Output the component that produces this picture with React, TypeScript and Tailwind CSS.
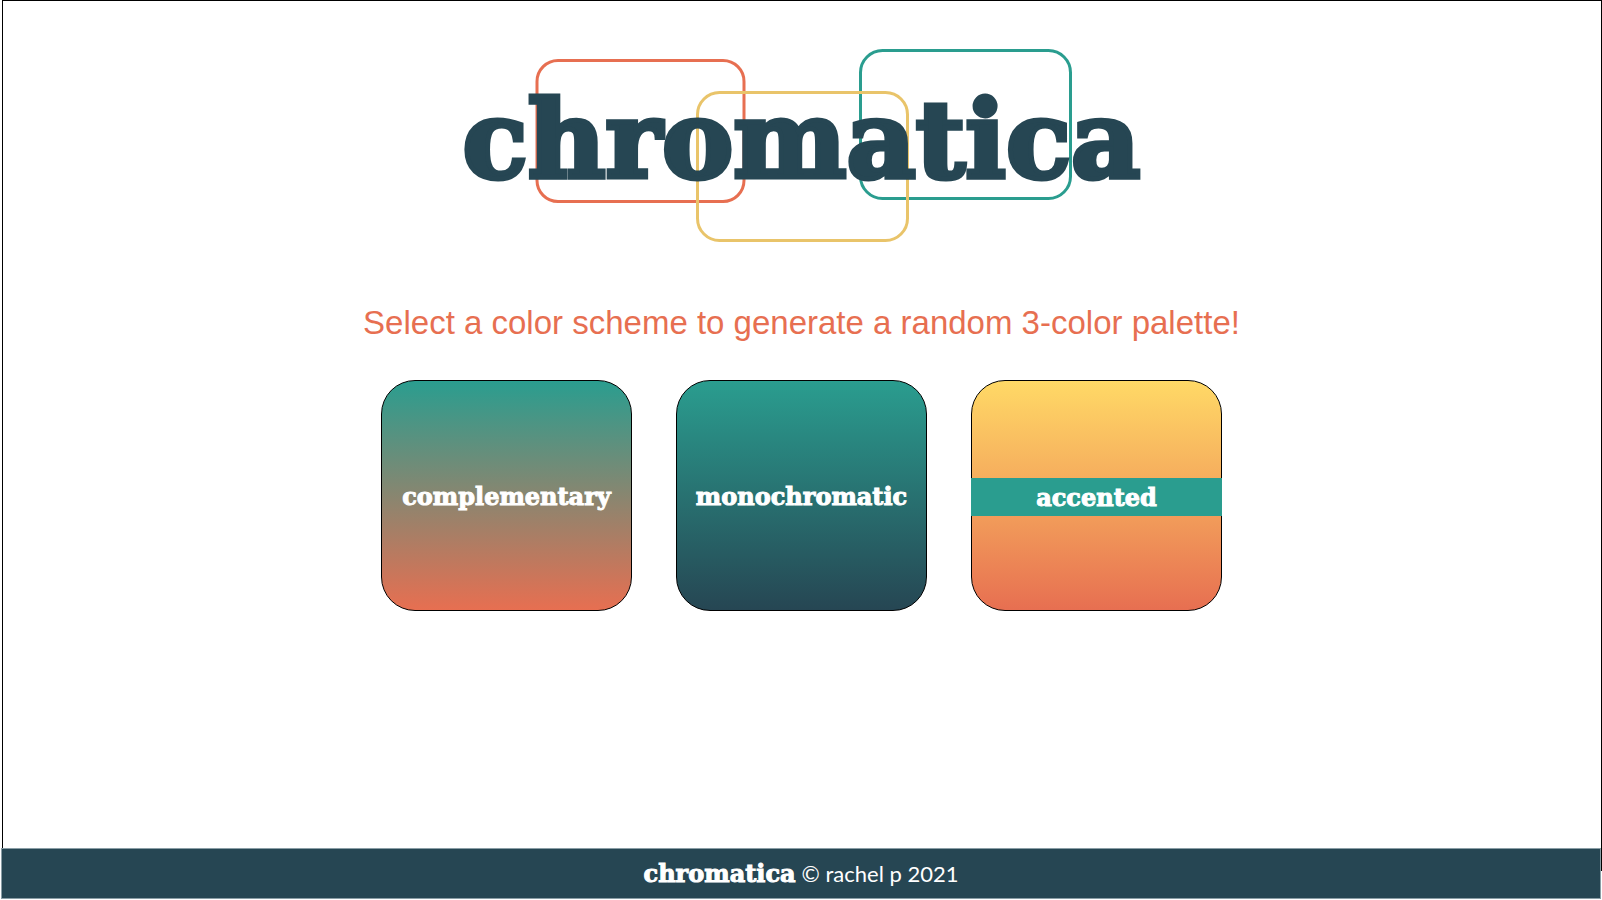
import React from "react";

type Scheme = { name: string; background: string; banded?: boolean };

const schemes: Scheme[] = [
  { name: "complementary", background: "bg-linear-to-b/srgb from-[#2a9d8f] to-[#e76f51]" },
  { name: "monochromatic", background: "bg-linear-to-b/srgb from-[#2a9d8f] to-[#264653]" },
  {
    name: "accented",
    background: "bg-linear-to-b/srgb from-[#ffd966] via-[#f4a65c] to-[#e76f51]",
    banded: true,
  },
];

function Logo() {
  return (
    <div className="relative mt-12 flex h-[193px] w-[678px] max-w-full justify-center">
      <svg
        className="absolute inset-0 h-full w-full"
        viewBox="0 0 678 193"
        fill="none"
        strokeWidth="3"
        aria-hidden="true"
      >
        <rect x="74" y="11.5" width="207" height="141" rx="21" stroke="#e76f51" />
        <rect x="397.5" y="1.5" width="210" height="148" rx="22" stroke="#2a9d8f" />
        <rect x="234.5" y="43.5" width="210" height="148" rx="22" stroke="#e9c46a" />
      </svg>
      <h1 className="relative mt-[29px] font-['DejaVu_Serif',serif] text-[107px] leading-[124px] font-bold whitespace-nowrap text-[#264653] [-webkit-text-stroke:5px_#264653] [stroke-linejoin:round]">
        chromatica
      </h1>
    </div>
  );
}

function SchemeButton({ name, background, banded }: Scheme) {
  return (
    <button
      type="button"
      className={`flex h-[231px] w-[251px] cursor-pointer items-center rounded-[34px] border border-black pt-0.5 ${background}`}
    >
      <span
        className={`-mx-px flex-1 text-center font-['DejaVu_Serif',serif] text-2xl font-bold text-white [-webkit-text-stroke:1px_white] ${
          banded ? "bg-[#2a9d8f] pt-0.5 leading-9" : "leading-[38px]"
        }`}
      >
        {name}
      </span>
    </button>
  );
}

export default function App() {
  return (
    <div className="flex min-h-screen flex-col bg-white pb-px font-['Liberation_Sans',Arial,sans-serif]">
      <main className="ml-0.5 flex flex-1 flex-col items-center border border-black pr-px pb-12">
        <Logo />
        <h2 className="mt-[60px] text-center text-[33px] leading-[42px] text-[#e76f51]">
          Select a color scheme to generate a random 3-color palette!
        </h2>
        <div className="mt-9 flex flex-wrap justify-center gap-11">
          {schemes.map((scheme) => (
            <SchemeButton key={scheme.name} {...scheme} />
          ))}
        </div>
      </main>
      <footer className="relative mx-px -mt-[23px] flex h-[51px] items-center justify-center gap-1.5 border border-[#8a9ea6] bg-[#264653] text-white">
        <span className="font-['DejaVu_Serif',serif] text-2xl font-bold [-webkit-text-stroke:1px_white]">
          chromatica
        </span>
        <span className="font-[Lato,sans-serif] text-[22px]">© rachel p 2021</span>
      </footer>
    </div>
  );
}
